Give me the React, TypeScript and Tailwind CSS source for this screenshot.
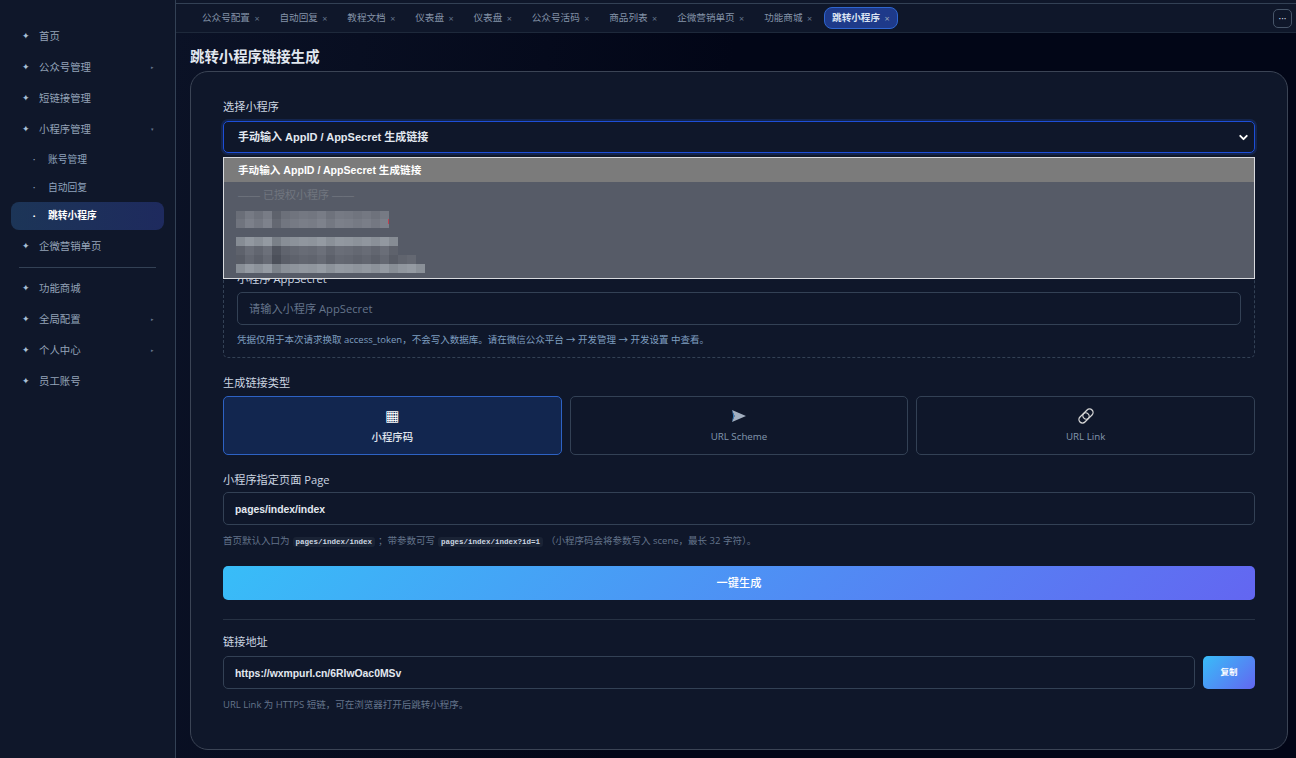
import { ChevronDown } from 'lucide-react'

const topMenu = [
  { label: '首页' },
  { label: '公众号管理', arrow: '▸' },
  { label: '短链接管理' },
  { label: '小程序管理', arrow: '▾' },
]
const subMenu = [
  { label: '账号管理' },
  { label: '自动回复' },
  { label: '跳转小程序', active: true },
]
const bottomMenu = [
  { label: '功能商城' },
  { label: '全局配置', arrow: '▸' },
  { label: '个人中心', arrow: '▸' },
  { label: '员工账号' },
]
const tabs = ['公众号配置', '自动回复', '教程文档', '仪表盘', '仪表盘', '公众号活码', '商品列表', '企微营销单页', '功能商城']

// blurred app names in the open dropdown
const mosaicRows = [
  { y: 0, cells: 17, tone: [112, 116, 126] },
  { y: 8, cells: 17, tone: [118, 122, 132] },
  { y: 26, cells: 18, tone: [140, 146, 154] },
  { y: 35, cells: 18, tone: [100, 104, 114] },
  { y: 44, cells: 20, tone: [94, 98, 108] },
  { y: 53, cells: 21, tone: [142, 148, 156] },
]
const mosaicDev = [-6, 6, -2, 8, -18, -4, 0, 4, 2, 8, -2, 6, 4, 0, 4, -2, 6, -6, 2, 6, -4]

function MenuItem({ label, arrow }: { label: string; arrow?: string }) {
  return (
    <div className="flex h-[31px] items-center pl-[22px] pr-[21px] text-[10.4px] text-[#94a3b8]">
      <span className="w-[17px] font-['DejaVu_Sans'] text-[9px] leading-none text-[#a9c0d6]">✦</span>
      <span className="flex-1">{label}</span>
      {arrow && <span className="text-[5px] leading-none text-[#64748b]">{arrow}</span>}
    </div>
  )
}

function Sidebar() {
  return (
    <aside className="flex w-[176px] shrink-0 flex-col border-r border-[#334155] bg-[#0f172a] pt-[21px]">
      {topMenu.map((m) => (
        <MenuItem key={m.label} {...m} />
      ))}
      <div className="mb-px mt-px flex flex-col">
        {subMenu.map((s) => (
          <div
            key={s.label}
            className={`mx-[11px] flex h-[28px] items-center rounded-lg pl-[22px] text-[9.75px] ${
              s.active
                ? 'bg-[linear-gradient(90deg,#1c3557,#1e2a5e)] font-bold text-white'
                : 'text-[#8fa3bd]'
            }`}
          >
            <span className="w-[15px] text-[6px] leading-none">•</span>
            {s.label}
          </div>
        ))}
      </div>
      <MenuItem label="企微营销单页" />
      <div className="mx-[19px] mb-[5px] mt-[5px] h-px bg-[#334155]" />
      {bottomMenu.map((m) => (
        <MenuItem key={m.label} {...m} />
      ))}
    </aside>
  )
}

function TabBar() {
  return (
    <div className="flex h-[29px] shrink-0 items-center gap-[3.5px] border-b border-[#1e293b] bg-[#0f172a] pl-[18px] pr-1">
      {tabs.map((t, i) => (
        <div key={i} className="flex h-[22px] items-center gap-1 px-2 text-[9.6px] text-[#8493a8]">
          {t}
          <span className="w-[6px] text-center text-[9px] leading-none text-[#64748b]">×</span>
        </div>
      ))}
      <div className="flex h-[22px] items-center gap-1 rounded-lg border border-[#2f66d0] bg-[#1e3a8a] px-[7px] text-[9.6px] font-bold text-[#dbe4f3]">
        跳转小程序
        <span className="w-[6px] text-center text-[9px] font-normal leading-none text-[#94a3b8]">×</span>
      </div>
      <button className="ml-auto flex h-[19px] w-[19px] items-center justify-center rounded-[5px] border border-[#475569] text-[10px] leading-none text-[#cbd5e1]">
        ···
      </button>
    </div>
  )
}

function Field({ value, placeholder }: { value?: string; placeholder?: string }) {
  return (
    <input
      readOnly
      value={value}
      placeholder={placeholder}
      className="h-[33px] w-full rounded-[5px] border border-[#334155] bg-[#0f172a] pb-[1px] pl-[11px] pr-3 pt-[2px] font-['Liberation_Sans','Noto_Sans_CJK_SC',sans-serif] text-[10.4px] font-bold text-[#e2e8f0] outline-none placeholder:font-['Open_Sans','Noto_Sans_CJK_SC',sans-serif] placeholder:text-[11.2px] placeholder:font-normal placeholder:text-[#64748b]"
    />
  )
}

function Label({ children, className = '' }: { children: React.ReactNode; className?: string }) {
  return <div className={`h-4 text-[11.2px] leading-[18px] text-[#cbd5e1] ${className}`}>{children}</div>
}

function Chip({ children }: { children: React.ReactNode }) {
  return (
    <code className="mx-[3px] rounded-[3px] bg-[#1a2335] px-[3px] py-px font-['Liberation_Mono',monospace] text-[7.5px] font-bold text-[#cbd5e1]">
      {children}
    </code>
  )
}

function Dropdown() {
  return (
    <div className="absolute left-8 right-8 top-[85px] h-[122px] border border-[#d8dade] bg-[#565b67] font-['Liberation_Sans','Noto_Sans_CJK_SC',sans-serif] text-[10.6px]">
      <div className="flex h-6 items-center bg-[#7b7b7b] pl-[14px] pt-px font-bold text-white">
        手动输入 AppID / AppSecret 生成链接
      </div>
      <div className="flex h-[26px] items-center pl-[14px] text-[11px] text-[#71767f]">—— 已授权小程序 ——</div>
      <svg width="200" height="64" className="ml-[12px] mt-[3px] block">
        {mosaicRows.map((r, ri) =>
          Array.from({ length: r.cells }).map((_, c) => {
            const d = mosaicDev[c]
            return (
              <rect
                key={`${ri}-${c}`}
                x={c * 9}
                y={r.y}
                width="9"
                height="9"
                fill={`rgb(${r.tone[0] + d},${r.tone[1] + d},${r.tone[2] + d})`}
              />
            )
          }),
        )}
        <rect x="152" y="8" width="1" height="5" fill="#c04050" />
      </svg>
    </div>
  )
}

function LinkIcon() {
  return (
    <svg width="18" height="18" viewBox="0 0 18 18" fill="none" stroke="#d6d6d6" strokeWidth="1.3">
      <g transform="rotate(-45 9 9)">
        <rect x="0.5" y="5.5" width="11.5" height="7" rx="3.5" />
        <rect x="6" y="5.5" width="11.5" height="7" rx="3.5" />
      </g>
    </svg>
  )
}

function SendIcon() {
  return (
    <svg width="14" height="12" viewBox="0 0 14 12">
      <path d="M0 0 L14 6 L0 12 L2.5 6 Z" fill="#a3afbf" />
      <path d="M0 0 L2.5 6 L0 12 L1.2 6 Z" fill="#3b82c4" />
    </svg>
  )
}

function TypeCard({ title, icon, active }: { title: string; icon: React.ReactNode; active?: boolean }) {
  return (
    <div
      className={`flex h-[59px] flex-col items-center rounded-[5px] border pt-[10px] ${
        active
          ? 'border-[#2d62c4] bg-[#12264f] text-[10.4px] font-medium text-[#e2e8f0]'
          : 'border-[#334155] text-[9.75px] text-[#8296ad]'
      }`}
    >
      <div className="flex h-[18px] items-center justify-center">{icon}</div>
      <div className="mt-1 leading-4">{title}</div>
    </div>
  )
}

function FormCard() {
  return (
    <section className="relative h-[679px] rounded-[18px] border border-[#3b4455] bg-[#0f172a] px-8 pt-[26px]">
      <Label className="mb-[7px]">选择小程序</Label>
      <div className="flex h-8 items-center rounded-[5px] border border-[#1d4ed8] pl-[14px] pr-[4px] font-['Liberation_Sans','Noto_Sans_CJK_SC',sans-serif] text-[11px] font-bold text-[#e2e8f0] shadow-[0_0_0_2px_rgba(37,99,235,0.18)]">
        <span className="flex-1">手动输入 AppID / AppSecret 生成链接</span>
        <ChevronDown size={13} strokeWidth={3.5} className="text-white" />
      </div>

      <div className="mt-3 flex h-[193px] flex-col justify-end rounded-[5px] border border-dashed border-[#334155] px-[13px] pb-[11px]">
        <Label className="mb-[6px]">小程序 AppSecret</Label>
        <Field placeholder="请输入小程序 AppSecret" />
        <div className="mt-[7px] h-[14px] text-[9.5px] leading-[15px] text-[#7f9fc0]">
          凭据仅用于本次请求换取 access_token，不会写入数据库。请在微信公众平台 → 开发管理 → 开发设置 中查看。
        </div>
      </div>

      <Label className="mb-[6px] mt-4">生成链接类型</Label>
      <div className="grid grid-cols-3 gap-2">
        <TypeCard active title="小程序码" icon={<span className="font-['DejaVu_Sans'] text-[15px] leading-none text-white">▦</span>} />
        <TypeCard title="URL Scheme" icon={<SendIcon />} />
        <TypeCard title="URL Link" icon={<LinkIcon />} />
      </div>

      <Label className="mb-[5px] mt-4">小程序指定页面 Page</Label>
      <Field value="pages/index/index" />
      <div className="mt-2 h-[14px] whitespace-nowrap text-[9.5px] leading-[16px] text-[#64748b]">
        首页默认入口为<Chip>pages/index/index</Chip>；带参数可写<Chip>pages/index/index?id=1</Chip>（小程序码会将参数写入 scene，最长 32 字符）。
      </div>

      <button className="mt-[19px] h-[34px] w-full rounded-[5px] bg-[linear-gradient(135deg,#38bdf8,#6366f1)] text-[11.2px] font-medium text-white">
        一键生成
      </button>
      <div className="mt-[19px] h-px bg-[#273244]" />

      <Label className="mb-[7px] mt-[13px]">链接地址</Label>
      <div className="flex gap-2">
        <Field value="https://wxmpurl.cn/6RIwOac0MSv" />
        <button className="h-[33px] w-[52px] shrink-0 rounded-[5px] bg-[linear-gradient(135deg,#38bdf8,#6366f1)] text-[8.5px] font-bold text-white">
          复制
        </button>
      </div>
      <div className="mt-2 h-[14px] text-[9.5px] leading-[16px] text-[#64748b]">
        URL Link 为 HTTPS 短链，可在浏览器打开后跳转小程序。
      </div>

      <Dropdown />
    </section>
  )
}

export default function App() {
  return (
    <div className="flex h-[758px] w-[1296px] overflow-hidden bg-[#0f172a] font-['Open_Sans','Noto_Sans_CJK_SC',sans-serif]">
      <Sidebar />
      <main className="flex min-w-0 flex-1 flex-col">
        <div className="mt-[3px] h-px shrink-0 bg-[#334155]" />
        <TabBar />
        <div className="flex-1 bg-[linear-gradient(100deg,#0b1226,#020617_45%,#020617)] pl-[14px] pr-2 pt-4">
          <h1 className="mb-[6px] h-4 text-[14.4px] font-bold leading-4 text-[#e2e8f0]">跳转小程序链接生成</h1>
          <FormCard />
        </div>
      </main>
    </div>
  )
}
